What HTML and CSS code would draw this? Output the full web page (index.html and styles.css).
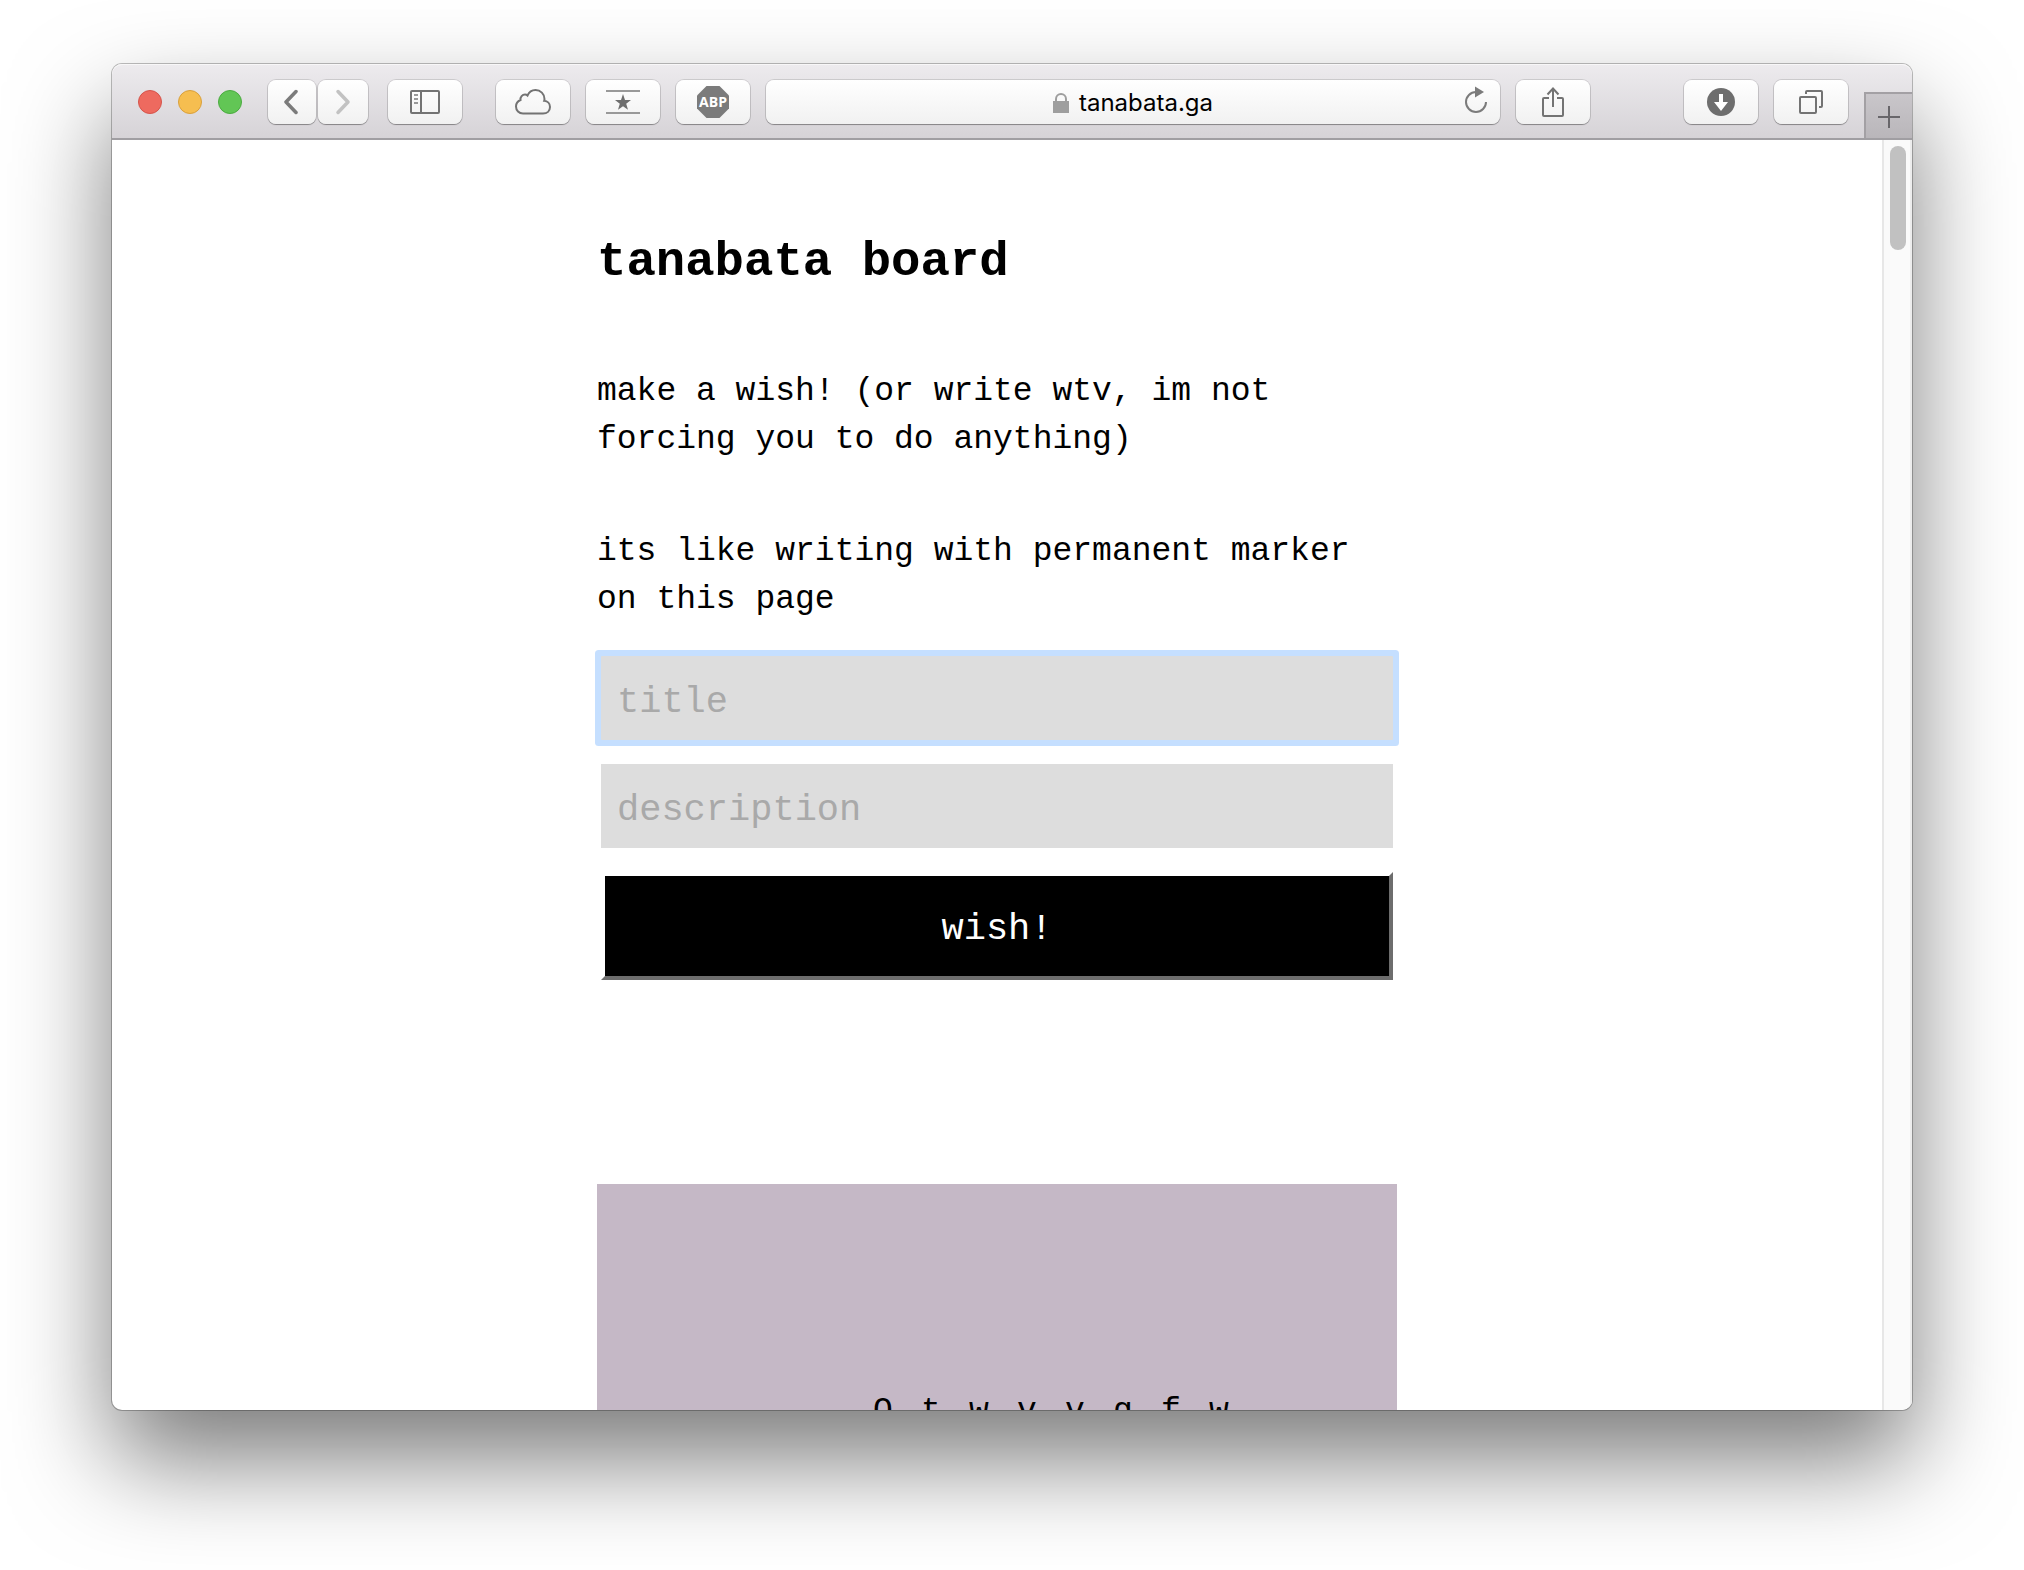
FILE: index.html
```html
<!DOCTYPE html>
<html lang="en">
<head>
<meta charset="utf-8">
<title>tanabata board</title>
<link rel="stylesheet" href="styles.css">
</head>
<body>
<div class="window">
  <header class="toolbar">
    <div class="lights">
      <button class="light light-close" aria-label="Close"></button>
      <button class="light light-min" aria-label="Minimize"></button>
      <button class="light light-zoom" aria-label="Zoom"></button>
    </div>
    <nav class="history" aria-label="History">
      <button class="tool tool-back" aria-label="Back"><svg width="16" height="26" viewBox="0 0 16 26"><path d="M12 2.500 2 13l10 10.500" fill="none" stroke="#7b7b7b" stroke-width="3.500" stroke-linecap="round" stroke-linejoin="round"/></svg></button>
      <button class="tool tool-forward" aria-label="Forward"><svg width="16" height="26" viewBox="0 0 16 26"><path d="M3 2.500 13 13 3 23.500" fill="none" stroke="#c2c2c2" stroke-width="3.500" stroke-linecap="round" stroke-linejoin="round"/></svg></button>
    </nav>
    <button class="tool" aria-label="Sidebar"><svg width="30" height="24" viewBox="0 0 30 24"><rect x="1" y="1" width="28" height="22" rx="1" fill="none" stroke="#737373" stroke-width="2"/><path d="M11 1v22" stroke="#737373" stroke-width="2"/><path d="M4 5h4M4 9h4M4 13h4" stroke="#999" stroke-width="2"/></svg></button>
    <div class="extensions">
      <button class="tool" aria-label="iCloud tabs"><svg width="36" height="26" viewBox="0 0 36 26"><path d="M8 24.500C4 24.500 1 21.500 1 17.500C1 14.500 3 12 5.500 11C5 8 7.500 5.500 10 5.500Q11.500 5.500 12.500 6.500C14 3 17 1 20.500 1C25.500 1 29.500 5 29.500 10Q29.500 11 29.200 11.800C32.500 12 35 14.500 35 18C35 22 32 24.500 28 24.500Z" fill="none" stroke="#737373" stroke-width="2"/></svg></button>
      <button class="tool" aria-label="Favorites"><svg width="34" height="24" viewBox="0 0 34 24"><path d="M0 1h34M0 23h34" stroke="#999" stroke-width="2"/><path d="m17 4 2 6h6l-4.800 3.800 1.800 6L17 16.200 12 19.800l1.800-6L9 10h6z" fill="#6e6e6e"/></svg></button>
      <button class="tool" aria-label="Adblock Plus"><svg width="32" height="32" viewBox="0 0 32 32"><path d="M9.500 0h13L32 9.500v13L22.500 32h-13L0 22.500v-13z" fill="#7b7b7b"/><text class="abp" x="16" y="21" text-anchor="middle">ABP</text></svg></button>
    </div>
    <div class="address">
      <a class="url" href="#"><svg width="16" height="20" viewBox="0 0 16 20"><path d="M3 9V6a5 5 0 0 1 10 0v3" fill="none" stroke="#9e9e9e" stroke-width="2"/><path d="M0 8h16v12H0z" fill="#9e9e9e"/></svg>tanabata.ga</a>
      <button class="reload" aria-label="Reload"><svg width="24" height="28" viewBox="0 0 24 28"><path d="M12 6A10 10 0 1 0 22 16" fill="none" stroke="#7b7b7b" stroke-width="2"/><path d="M11 0.500 20 6l-9 5.500z" fill="#7b7b7b"/></svg></button>
    </div>
    <button class="tool" aria-label="Share"><svg width="24" height="32" viewBox="0 0 24 32"><path d="M8 12H3a1 1 0 0 0-1 1v16a1 1 0 0 0 1 1h18a1 1 0 0 0 1-1V13a1 1 0 0 0-1-1h-5M12 21V3M6.500 8.500 12 2.500l5.500 6" fill="none" stroke="#737373" stroke-width="2"/></svg></button>
    <div class="trailing">
      <button class="tool" aria-label="Downloads"><svg width="28" height="28" viewBox="0 0 28 28"><circle cx="14" cy="14" r="14" fill="#6e6e6e"/><path d="M12 6h4v8h5l-7 9-7-9h5z" fill="#fff"/></svg></button>
      <button class="tool" aria-label="Tab overview"><svg width="24" height="24" viewBox="0 0 24 24"><rect x="1" y="7" width="16" height="16" rx="1" fill="none" stroke="#737373" stroke-width="2"/><path d="M7 4V2a1 1 0 0 1 1-1h14a1 1 0 0 1 1 1v14a1 1 0 0 1-1 1h-2" fill="none" stroke="#737373" stroke-width="2"/></svg></button>
      <button class="new-tab" aria-label="New tab"><svg width="22" height="22" viewBox="0 0 22 22"><path d="M11 0v22M0 11h22" stroke="#68666a" stroke-width="2"/></svg></button>
    </div>
  </header>
  <div class="viewport">
    <main class="page">
      <h1 class="heading">tanabata board</h1>
      <p class="intro">make a wish! (or write wtv, im not forcing you to do anything)</p>
      <p class="intro">its like writing with permanent marker on this page</p>
      <form class="wish-form">
        <input class="field field-active" type="text" aria-label="title" placeholder="title">
        <input class="field" type="text" aria-label="description" placeholder="description">
        <button class="submit" type="button">wish!</button>
      </form>
      <article class="card">
        <p class="strips"><span>O</span><span>t</span><span>w</span><span>v</span><span>v</span><span>g</span><span>f</span><span>w</span></p>
      </article>
    </main>
    <div class="scrollbar"><div class="thumb"></div></div>
  </div>
</div>
</body>
</html>
```
FILE: styles.css
```css
* { box-sizing: border-box; }

body {
  margin: 0;
  padding: 64px 112px 160px;
  height: 100vh;
  overflow: hidden;
  background: #fff;
  color: #000;
  font-family: "Liberation Mono", monospace;
}

button { font: inherit; cursor: pointer; }
svg { display: block; }

.window {
  display: flex;
  flex-direction: column;
  height: 100%;
  border-radius: 10px;
  background: #fff;
  box-shadow: 0 0 0 1px rgba(0, 0, 0, 0.25), 0 50px 100px rgba(0, 0, 0, 0.52);
}

/* Browser toolbar */
.toolbar {
  display: flex;
  align-items: center;
  flex: none;
  height: 76px;
  padding: 2px 0 0 26px;
  border-bottom: 2px solid #a09ea2;
  border-radius: 10px 10px 0 0;
  background: linear-gradient(#edebee, #d6d3d7);
  box-shadow: inset 0 1px #f8f7f8;
}

.lights { display: flex; gap: 16px; margin-right: 26px; }
.light { width: 24px; height: 24px; padding: 0; border: 1px solid; border-radius: 50%; }
.light-close { background: #ee6a5f; border-color: #d5544b; }
.light-min { background: #f6be50; border-color: #d9a03c; }
.light-zoom { background: #62c655; border-color: #4bab40; }

.history { display: flex; gap: 2px; margin-right: 20px; }

.tool {
  display: flex;
  align-items: center;
  justify-content: center;
  flex: none;
  width: 74px;
  height: 44px;
  padding: 0;
  border: 0;
  border-radius: 8px;
  background: linear-gradient(#fff, #f1f1f1);
  box-shadow: 0 0 0 1px rgba(0, 0, 0, 0.12), 0 1px 1px rgba(0, 0, 0, 0.3);
}
.tool-back { width: 48px; }
.tool-forward { width: 50px; }

.extensions { display: flex; gap: 16px; margin: 0 16px 0 34px; }
.abp { font: bold 14px "Open Sans", sans-serif; fill: #fff; }

.address {
  display: flex;
  align-items: center;
  flex: 1;
  height: 44px;
  margin-right: 16px;
  padding: 0 12px 0 36px;
  border-radius: 8px;
  background: linear-gradient(#fff, #f1f1f1);
  box-shadow: 0 0 0 1px rgba(0, 0, 0, 0.12), 0 1px 1px rgba(0, 0, 0, 0.3);
}
.url {
  display: flex;
  align-items: center;
  justify-content: center;
  gap: 10px;
  flex: 1;
  padding-top: 2px;
  color: #000;
  font-family: Inter, sans-serif;
  font-size: 24px;
  line-height: 32px;
  text-decoration: none;
}
.reload { padding: 0 0 4px; border: 0; background: none; }

.trailing { display: flex; align-items: center; gap: 16px; height: 100%; margin-left: 94px; }
.new-tab {
  display: flex;
  align-items: center;
  justify-content: center;
  align-self: flex-end;
  width: 48px;
  height: 46px;
  padding: 2px 0 0;
  border: solid #a3a0a4;
  border-width: 2px 0 0 2px;
  background: linear-gradient(#c9c6ca, #b9b6ba);
}

/* Page area */
.viewport {
  display: flex;
  flex: 1;
  min-height: 0;
  overflow: hidden;
  border-radius: 0 0 10px 10px;
}
.page { flex: 1; padding: 86px calc(50% - 400px - 15px) 0; }

.heading { margin: 0 0 70px; font-size: 49px; line-height: 72px; }
.intro { margin: 0 0 64px; font-size: 33px; line-height: 48px; }

.wish-form {
  display: flex;
  flex-direction: column;
  gap: 24px;
  margin: -32px 4px 204px;
}
.field {
  width: 100%;
  height: 84px;
  padding: 8px 16px 0;
  border: 0;
  background: #ddd;
  color: #000;
  font: inherit;
  font-size: 37px;
}
.field::placeholder { color: #a9a9a9; opacity: 1; }
.field-active { outline: none; box-shadow: 0 0 0 6px #c5dfff; border-radius: 1px; }
.submit {
  height: 108px;
  padding: 6px 0 0;
  border: 4px solid;
  border-color: #fff #6d6d6d #6d6d6d #fff;
  background: #000;
  background-clip: padding-box;
  color: #fff;
  font-size: 37px;
}

.card { height: 800px; padding: 204px 0 0 262px; background: #c5b8c6; }
.strips { display: flex; margin: 0; font-size: 33px; line-height: 48px; }
.strips span { width: 48px; text-align: center; }

.scrollbar {
  flex: none;
  width: 30px;
  padding: 6px 6px 0;
  border-left: 2px solid #e7e7e7;
  border-right: 2px solid #ededed;
  background: #fafafa;
}
.thumb { width: 16px; height: 104px; border-radius: 8px; background: #c1c1c1; }
```
